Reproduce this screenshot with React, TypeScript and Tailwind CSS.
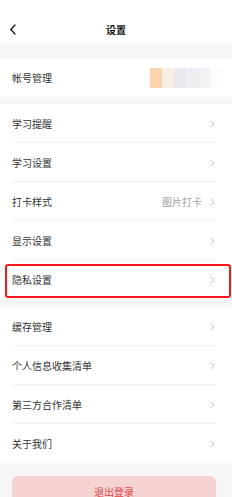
import React from "react";

const Chevron = () => (
  <svg width="5" height="8" viewBox="0 0 5 8" fill="none">
    <path d="M1 1l3 3-3 3" stroke="#bcbcbc" strokeWidth="0.9" strokeLinecap="round" strokeLinejoin="round" />
  </svg>
);

type RowProps = { label: string; value?: string; divider?: boolean; highlight?: boolean };

const Row = ({ label, value, divider, highlight }: RowProps) => (
  <div className="relative h-[39px] bg-white">
    <div className="flex h-full items-center pl-3 pr-[17px]">
      <span className="flex-1 text-[10px] text-[#333333]">{label}</span>
      {value && <span className="mr-[8px] text-[10px] text-[#a3a3a3]">{value}</span>}
      <Chevron />
    </div>
    {divider && <div className="absolute bottom-0 left-3 right-[15px] h-px bg-[#f1f1f1]" />}
    {highlight && (
      <div className="absolute left-[5px] right-[1px] top-[4px] h-[34px] rounded-[3px] border-[2.5px] border-[#f5191b]" />
    )}
  </div>
);

export default function App() {
  const group1 = [
    { label: "学习提醒" },
    { label: "学习设置" },
    { label: "打卡样式", value: "图片打卡" },
    { label: "显示设置" },
    { label: "隐私设置", highlight: true },
  ];
  const group2 = [
    { label: "缓存管理" },
    { label: "个人信息收集清单" },
    { label: "第三方合作清单" },
    { label: "关于我们" },
  ];
  return (
    <div
      className="h-[497px] w-[232px] overflow-hidden bg-[#f6f6f6]"
      style={{ fontFamily: '"Noto Sans CJK SC", "Noto Sans", sans-serif' }}
    >
      <div className="relative h-[43px] bg-white">
        <div className="absolute left-[9px] top-[24px]">
          <svg width="8" height="11" viewBox="0 0 8 11" fill="none">
            <path d="M6 1L1.8 5.5 6 10" stroke="#111" strokeWidth="1.2" strokeLinecap="round" strokeLinejoin="round" />
          </svg>
        </div>
        <div className="absolute inset-x-0 top-[22px] text-center text-[10px] font-bold leading-[16px] text-[#111]">
          设置
        </div>
      </div>
      <div className="h-[15px]" />
      <div className="flex h-[39px] items-center bg-white pl-3 pr-[10px]">
        <span className="flex-1 text-[10px] text-[#333333]">帐号管理</span>
        <div className="flex h-[20px]">
          <div className="w-[12px] bg-[#fcd3ad]" />
          <div className="w-[12px] bg-[#f9eee5]" />
          <div className="w-[12px] bg-[#e9eaef]" />
          <div className="w-[12px] bg-[#eeeff3]" />
          <div className="w-[12px] bg-[#f2f2f5]" />
          <div className="w-[12px] bg-[#fcfcfc]" />
        </div>
      </div>
      <div className="h-[7px]" />
      <div>
        {group1.map((r, i) => (
          <Row key={r.label} {...r} divider={i < group1.length - 1} />
        ))}
      </div>
      <div className="h-[8px]" />
      <div>
        {group2.map((r, i) => (
          <Row key={r.label} {...r} divider={i < group2.length - 1} />
        ))}
      </div>
      <div className="ml-3 mr-[16px] mt-[13px] flex h-[36px] items-start justify-center rounded-[6px] bg-[#f6d3d3] pt-[8px]">
        <span className="text-[10px] text-[#e04b4b]">退出登录</span>
      </div>
    </div>
  );
}
